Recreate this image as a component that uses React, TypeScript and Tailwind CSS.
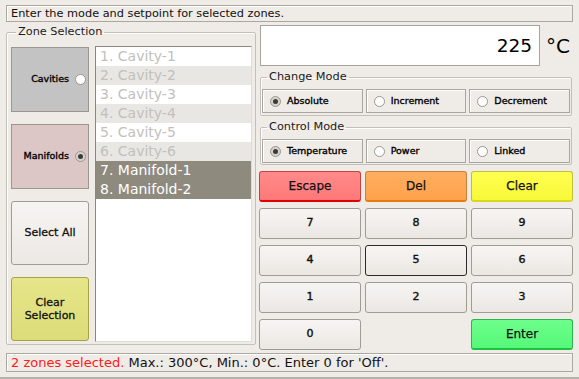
import React from "react";

const Radio = ({ on }: { on?: boolean }) => (
  <span
    className={`inline-flex items-center justify-center w-[11px] h-[11px] rounded-full border border-[#9c978f] shrink-0 ${
      on ? "bg-[#d6d2cc]" : "bg-white"
    }`}
  >
    {on && <span className="w-[5px] h-[5px] rounded-full bg-[#3a3a3a]" />}
  </span>
);

const ModeBox = ({ label, on }: { label: string; on?: boolean }) => (
  <div className="flex items-center gap-[6px] pl-[7px] h-[24px] border border-[#aaa59e] bg-[#efebe7] shadow-[inset_1px_1px_0_#fff]">
    <Radio on={on} />
    <span className="text-[9.5px] text-black [-webkit-text-stroke:0.35px_black]">{label}</span>
  </div>
);

const Group = ({
  title,
  className,
  children,
}: {
  title: string;
  className?: string;
  children: React.ReactNode;
}) => (
  <fieldset
    className={`border border-[#c4c0b9] rounded-[2px] shadow-[inset_1px_1px_0_#fff] ${className ?? ""}`}
  >
    <legend className="ml-[5px] px-[2px] text-[11.3px] leading-[14px] text-[#1a1a1a]">
      {title}
    </legend>
    {children}
  </fieldset>
);

const Key = ({ label, className }: { label: string; className?: string }) => (
  <button
    className={`h-[31px] rounded-[3px] border text-[11px] text-[#111] [-webkit-text-stroke:0.4px_#111] ${
      className ?? "border-[#a09b93] bg-gradient-to-b from-[#f7f5f3] to-[#ebe7e3]"
    }`}
  >
    {label}
  </button>
);

const zones = [
  { n: "1. Cavity-1", bg: "bg-white", sel: false },
  { n: "2. Cavity-2", bg: "bg-[#e9e7e3]", sel: false },
  { n: "3. Cavity-3", bg: "bg-white", sel: false },
  { n: "4. Cavity-4", bg: "bg-[#e9e7e3]", sel: false },
  { n: "5. Cavity-5", bg: "bg-white", sel: false },
  { n: "6. Cavity-6", bg: "bg-[#e9e7e3]", sel: false },
  { n: "7. Manifold-1", bg: "bg-[#8e8a7e]", sel: true },
  { n: "8. Manifold-2", bg: "bg-[#8e8a7e]", sel: true },
];

export default function App() {
  return (
    <div className="w-[579px] h-[379px] bg-[#efebe7] font-['DejaVu_Sans',sans-serif] text-[#111] border-b-[2px] border-[#b5b1ab] overflow-hidden">
      {/* hint bar */}
      <div className="mx-[6px] mt-[5px] h-[17px] border border-[#aca8a1] shadow-[inset_1px_1px_0_#fff] pl-[4px] text-[11.3px] leading-[15px]">
        Enter the mode and setpoint for selected zones.
      </div>

      <div className="flex gap-[4px] px-[6px] mt-[3px] h-[324px]">
        {/* Zone selection */}
        <Group title="Zone Selection" className="w-[250px] h-[320px] pl-[4px] pr-[3px] pt-[8px]">
          <div className="flex gap-[6px]">
            <div className="w-[78px] h-[294px] flex flex-col justify-between">
              <button className="h-[65px] border border-[#9b968e] bg-[#c3c3c3] flex items-center justify-end gap-[6px] pr-[2px] text-[9.5px] text-black [-webkit-text-stroke:0.35px_black]">
                Cavities <Radio />
              </button>
              <button className="h-[65px] border border-[#9b968e] bg-[#dcc7c6] flex items-center justify-end gap-[6px] pr-[2px] text-[9.5px] text-black [-webkit-text-stroke:0.35px_black]">
                Manifolds <Radio on />
              </button>
              <button className="h-[64px] rounded-[3px] border border-[#a09b93] bg-gradient-to-b from-[#f6f4f2] to-[#ece8e4] text-[11px] text-[#111] [-webkit-text-stroke:0.3px_#111]">
                Select All
              </button>
              <button className="h-[64px] rounded-[3px] border border-[#a6a245] bg-gradient-to-b from-[#e6e68a] to-[#dcdc78] text-[11px] leading-[13px] text-[#111] [-webkit-text-stroke:0.3px_#111]">
                Clear
                <br />
                Selection
              </button>
            </div>
            <div className="w-[157px] h-[296px] -mt-[1px] border border-[#8a8680] border-r-[#e0ddd8] border-b-[#e0ddd8] bg-white">
              {zones.map((z) => (
                <div
                  key={z.n}
                  className={`h-[19px] pl-[4px] text-[14px] leading-[19px] ${z.bg} ${
                    z.sel ? "text-white" : "text-[#c2c0bc]"
                  }`}
                >
                  {z.n}
                </div>
              ))}
            </div>
          </div>
        </Group>

        {/* right column */}
        <div className="w-[313px] flex flex-col">
          <div className="flex items-center h-[41px]">
            <div className="w-[280px] h-[41px] border border-[#a8a49d] bg-white text-right pr-[7px] text-[18.5px] leading-[39px] text-black">
              225
            </div>
            <span className="ml-[6px] text-[20px] text-black">°C</span>
          </div>

          <Group title="Change Mode" className="mt-[4px] mr-[1px] px-[1px] pt-[5px] pb-[2px]">
            <div className="grid grid-cols-3 gap-[3px]">
              <ModeBox label="Absolute" on />
              <ModeBox label="Increment" />
              <ModeBox label="Decrement" />
            </div>
          </Group>

          <Group title="Control Mode" className="mt-[4px] mr-[1px] px-[1px] pt-[5px] pb-[1px]">
            <div className="grid grid-cols-3 gap-[3px]">
              <ModeBox label="Temperature" on />
              <ModeBox label="Power" />
              <ModeBox label="Linked" />
            </div>
          </Group>

          <div className="grid grid-cols-3 gap-x-[4px] gap-y-[6px] mt-[6px] -ml-[1px]">
            <Key
              label="Escape"
              className="border-[#c84040] border-b-[2px] border-b-[#e00000] bg-gradient-to-b from-[#ff8a8a] to-[#ff7878] !text-[12px] ![-webkit-text-stroke:0.25px_#111]"
            />
            <Key
              label="Del"
              className="border-[#c8823c] border-b-[2px] border-b-[#e87a10] bg-gradient-to-b from-[#ffae5e] to-[#ffa24c] !text-[12px] ![-webkit-text-stroke:0.25px_#111]"
            />
            <Key
              label="Clear"
              className="border-[#c0c040] border-b-[2px] border-b-[#d8d820] bg-gradient-to-b from-[#ffff50] to-[#f8f838] !text-[12px] ![-webkit-text-stroke:0.25px_#111]"
            />
            <Key label="7" />
            <Key label="8" />
            <Key label="9" />
            <Key label="4" />
            <Key label="5" className="border-[#2a2a2a] bg-gradient-to-b from-[#f7f5f3] to-[#ebe7e3]" />
            <Key label="6" />
            <Key label="1" />
            <Key label="2" />
            <Key label="3" />
            <Key label="0" />
            <div />
            <Key
              label="Enter"
              className="border-[#30b050] border-b-[2px] border-b-[#20c040] bg-gradient-to-b from-[#6dff8c] to-[#55f878] !text-[12px] ![-webkit-text-stroke:0.25px_#111]"
            />
          </div>
        </div>
      </div>

      {/* status */}
      <div className="mx-[6px] mt-[4px] h-[19px] border border-[#aca8a1] shadow-[inset_1px_1px_0_#fff] pl-[4px] text-[13px] leading-[17px]">
        <span className="text-[#ff1a1a]">2 zones selected.</span> Max.: 300°C, Min.: 0°C. Enter 0 for 'Off'.
      </div>
    </div>
  );
}
